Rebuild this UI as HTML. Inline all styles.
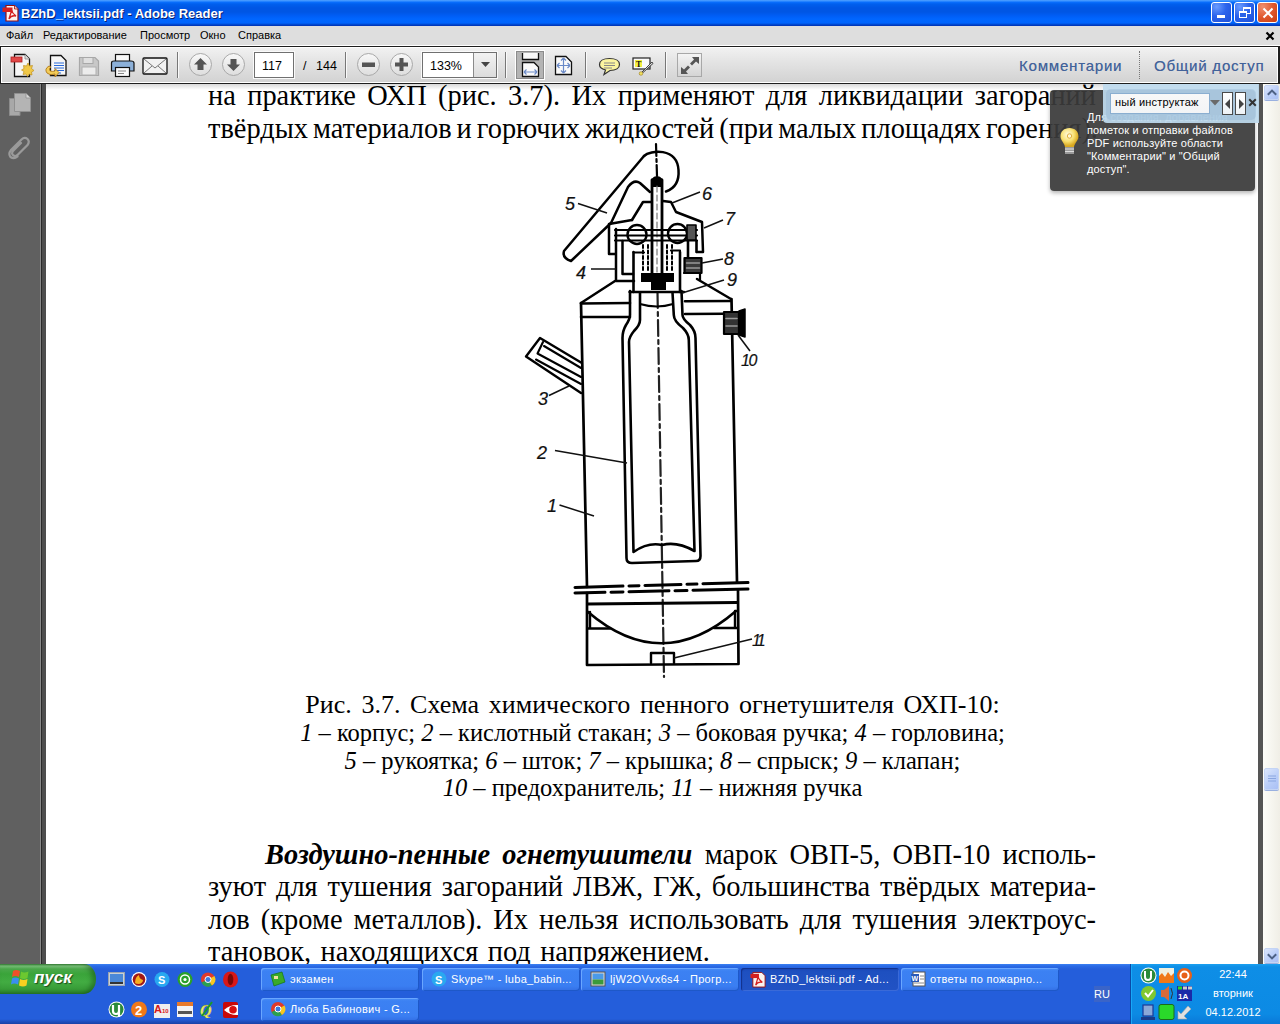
<!DOCTYPE html>
<html><head><meta charset="utf-8">
<style>
*{margin:0;padding:0;box-sizing:border-box}
html,body{width:1280px;height:1024px;overflow:hidden;background:#fff}
body{position:relative;font-family:"Liberation Sans",sans-serif}
.a{position:absolute}
#title{left:0;top:0;width:1280px;height:26px;background:linear-gradient(#4a9cff 0,#3d95ff 1px,#0a70ff 2px,#0060ee 4px,#0056e4 8px,#0056e4 12px,#005ef6 16px,#0066ff 19px,#0064fc 23px,#0048d0 24.5px,#0030b0 26px)}
#title .t{left:21px;top:6px;color:#fff;font:bold 13px "Liberation Sans",sans-serif;text-shadow:1px 1px 0 #0a1e6e;white-space:nowrap}
#menu{left:0;top:26px;width:1280px;height:19px;background:#dedede}
#menu span{position:absolute;top:3px;font-size:11px;color:#000;white-space:nowrap}
#tb{left:0;top:45px;width:1280px;height:39px;background:#fff}
#tbin{left:0;top:46px;width:1280px;height:38px;border-top:1px solid #1e1e1e;border-left:1px solid #1e1e1e;border-right:2px solid #1e1e1e;border-bottom:1px solid #1e1e1e;box-shadow:inset 1px 1px 0 #fff,inset -1px -1px 0 #fff;background:linear-gradient(#f2f2f2,#e4e4e4 40%,#d2d2d2)}
#content{left:0;top:84px;width:1280px;height:880px;background:#fff}
#nav{left:0;top:84px;width:40px;height:880px;background:#606060}
#nav2{left:40px;top:84px;width:6px;height:880px;background:#4e4e4e;border-left:1px solid #8a8a8a}
#nav3{left:41px;top:84px;width:1px;height:880px;background:#2a2a2a}
#rstrip{left:1258px;top:84px;width:5px;height:880px;background:#555}
#sb{left:1263px;top:84px;width:17px;height:880px;background:linear-gradient(90deg,#fdfdf9,#f0eee6)}
#page{left:46px;top:84px;width:1213px;height:880px;background:#fff;overflow:hidden}
.body{font-family:"Liberation Serif",serif;font-size:28.4px;line-height:32px;color:#000;white-space:nowrap}
.j{text-align:justify;text-align-last:justify;white-space:normal}
.cap{font-family:"Liberation Serif",serif;font-size:24.5px;line-height:28px;color:#000;white-space:nowrap;text-align:center}
#taskbar{left:0;top:964px;width:1280px;height:60px;background:linear-gradient(#3c81f3 0,#2b6be6 2px,#245edb 5px,#245edb 55px,#1941a5 60px)}

.wb{top:2px;width:21px;height:21px;border:1px solid #fff;border-radius:3px;background:radial-gradient(circle at 25% 20%,#6a9cff,#2c64ec 45%,#1d4fd8)}
.cl{background:radial-gradient(circle at 25% 20%,#f09070,#e0582e 50%,#c83c10)}
.sep{top:5px;width:2px;height:26px;border-left:1px solid #777;border-right:1px solid #fafafa}
.circ{top:6px;width:23px;height:23px;border:1px solid #a9a9a9;border-radius:50%;background:linear-gradient(#f8f8f8,#dedede)}
.circ svg{position:absolute;left:0;top:0}
.inp{top:5px;height:26px;background:#fff;border:1px solid #707070;box-shadow:0 0 0 1px #fafafa;font-size:12.5px;color:#000}
.tt{font-size:12.5px;color:#000}
.cm{font-size:15px;letter-spacing:0.8px;color:#42629a;text-shadow:0.2px 0 0 rgba(66,98,154,0.6)}

.tip{font-size:11px;line-height:12.9px;color:#fff;white-space:nowrap;letter-spacing:0.15px}
.fbtn{top:92px;width:11px;height:23px;background:linear-gradient(#fff,#eef2f6);border:1px solid #4a4a4a}
.sbb{width:15px;height:15px;border:1px solid #c4d4f4;border-radius:2px;background:linear-gradient(135deg,#dce6fc,#b8ccf8 60%,#aac0f4);box-shadow:0 1px 0 #9ab0e0}

.tbtn{letter-spacing:0.3px;width:158px;height:23px;border-radius:3px;background:linear-gradient(#4a90f8 0,#3c81f3 3px,#3a7ef2 18px,#336ee4 23px);box-shadow:inset 1px 1px 0 #6aa6ff,inset -1px -1px 0 #1e58c8;color:#fff;font-size:11px;white-space:nowrap;overflow:hidden}
.tbtn span{position:absolute;left:29px;top:5px}
.act{background:linear-gradient(#1a48b8,#1e50c0 4px,#2152c4 20px);box-shadow:inset 1px 1px 1px #12308a,inset -1px -1px 0 #3a6ad8}
.clk{color:#fff;font-size:11px;text-align:center;white-space:nowrap}
</style></head><body>
<div id="title" class="a">
<svg class="a" style="left:2px;top:4px" width="18" height="18" viewBox="0 0 18 18">
<path d="M4 1.5 H12.5 L16 5 V17 H4 Z" fill="#fbf4f0" stroke="#9a1010" stroke-width="1.2"/>
<path d="M12.5 1.5 V5 H16" fill="#e8d0d0" stroke="#9a1010" stroke-width="0.8"/>
<rect x="0.5" y="3.5" width="10" height="4.5" fill="#d42020"/>
<path d="M7 15 Q9 9 9.5 6 Q10 9 14 12 Q9 11 7 15 Z" fill="none" stroke="#d42020" stroke-width="1.4"/>
</svg>
<div class="a t">BZhD_lektsii.pdf - Adobe Reader</div>
<div class="a wb" style="left:1211px"><div class="a" style="left:5px;top:12px;width:8px;height:3px;background:#fff"></div></div>
<div class="a wb" style="left:1234px"><div class="a" style="left:8px;top:4px;width:8px;height:7px;border:1.5px solid #fff;border-top-width:2px"></div><div class="a" style="left:4px;top:8px;width:8px;height:7px;border:1.5px solid #fff;border-top-width:2px;background:#2a62e8"></div></div>
<div class="a wb cl" style="left:1257px"><svg class="a" style="left:3px;top:3px" width="14" height="14"><path d="M2.5 2.5 L11.5 11.5 M11.5 2.5 L2.5 11.5" stroke="#fff" stroke-width="2"/></svg></div>
</div>
<div id="menu" class="a">
<span style="left:6px">Файл</span><span style="left:43px">Редактирование</span><span style="left:140px">Просмотр</span><span style="left:200px">Окно</span><span style="left:238px">Справка</span>
<svg class="a" style="left:1265px;top:5px" width="10" height="10"><path d="M1.5 1.5 L8.5 8.5 M8.5 1.5 L1.5 8.5" stroke="#000" stroke-width="2.2"/></svg>
</div>
<div id="tb" class="a"></div>
<div id="tbin" class="a">
<!-- icon 1 create -->
<svg class="a" style="left:9px;top:6px" width="26" height="26" viewBox="0 0 26 26">
<path d="M4.5 1.5 H15 L19.5 6 V23.5 H4.5 Z" fill="#f6f6f6" stroke="#111" stroke-width="1.3"/>
<path d="M15 1.5 V6 H19.5" fill="#ddd" stroke="#888" stroke-width="0.8"/>
<rect x="1" y="4" width="11" height="5" fill="#e04848" stroke="#b02020" stroke-width="0.8"/>
<path d="M18 10 L19.5 13 L22.5 12.5 L21.5 15.5 L24 17.5 L21.5 19 L22 22 L19 21 L17.5 23.5 L16 21 L13 21.5 L14 18.5 L11.5 17 L14 15.5 L13.5 12.5 L16.5 13 Z" fill="#f0c848" stroke="#c09020" stroke-width="0.7"/>
</svg>
<!-- icon 2 -->
<svg class="a" style="left:43px;top:7px" width="26" height="26" viewBox="0 0 26 26">
<path d="M6.5 1.5 H17 L22 6.5 V21.5 H6.5 Z" fill="#f6f6f6" stroke="#111" stroke-width="1.3"/>
<path d="M10 9 H20 M10 11.5 H20 M10 14 H20 M10 16.5 H20 M10 19 H17" stroke="#2a6ad8" stroke-width="1.2"/>
<path d="M5 12 Q0 15 3 19 Q6 22 11 20 L11 23 L15 18.5 L11 14.5 L11 17 Q6 18 5.5 16 Q5 14 7 13 Z" fill="#f2cc58" stroke="#b07818" stroke-width="0.9"/>
</svg>
<!-- save -->
<svg class="a" style="left:77px;top:9px" width="22" height="22" viewBox="0 0 22 22">
<path d="M1.5 1.5 H17 L20.5 5 V19.5 H1.5 Z" fill="#c8c8c8" stroke="#a8a8a8" stroke-width="1.2"/>
<rect x="5" y="1.5" width="10" height="6" fill="#e0e0e0" stroke="#a8a8a8"/>
<rect x="4" y="11" width="14" height="8" fill="#ececec" stroke="#b0b0b0"/>
</svg>
<!-- print -->
<svg class="a" style="left:109px;top:6px" width="26" height="26" viewBox="0 0 26 26">
<rect x="5.5" y="1.5" width="14" height="8" fill="#f8f8f8" stroke="#111" stroke-width="1.2"/>
<path d="M1.5 10 Q1.5 8 4 8 H21 Q24 8 24 10 V18 H1.5 Z" fill="#8cb0d8" stroke="#111" stroke-width="1.2"/>
<rect x="5.5" y="14.5" width="14" height="9" fill="#fafafa" stroke="#111" stroke-width="1.2"/>
<path d="M8 18 H16 M8 20.5 H14" stroke="#888"/>
</svg>
<!-- mail -->
<svg class="a" style="left:141px;top:10px" width="27" height="19" viewBox="0 0 27 19">
<rect x="1" y="1" width="24" height="16" rx="1" fill="#f2f2f2" stroke="#111" stroke-width="1.3"/>
<path d="M2 2 L13 11 L24 2 M2 16 L10 9 M24 16 L16 9" fill="none" stroke="#777" stroke-width="1"/>
</svg>
<div class="a sep" style="left:176px"></div>
<!-- up/down -->
<div class="a circ" style="left:188px"><svg width="21" height="21" viewBox="0 0 21 21"><path d="M10.5 4 L17 10.5 H13.5 V16 H7.5 V10.5 H4 Z" fill="#555"/></svg></div>
<div class="a circ" style="left:221px"><svg width="21" height="21" viewBox="0 0 21 21"><path d="M10.5 17 L17 10.5 H13.5 V5 H7.5 V10.5 H4 Z" fill="#555"/></svg></div>
<div class="a inp" style="left:253px;width:40px"><span class="a" style="left:7px;top:6px">117</span></div>
<span class="a tt" style="left:302px;top:12px">/</span>
<span class="a tt" style="left:315px;top:12px">144</span>
<div class="a sep" style="left:344px"></div>
<div class="a circ" style="left:356px"><svg width="21" height="21" viewBox="0 0 21 21"><rect x="4" y="8.5" width="13" height="4.5" fill="#555"/></svg></div>
<div class="a circ" style="left:389px"><svg width="21" height="21" viewBox="0 0 21 21"><path d="M8.5 4 H12.5 V8.5 H17 V12.5 H12.5 V17 H8.5 V12.5 H4 V8.5 H8.5 Z" fill="#555"/></svg></div>
<div class="a inp" style="left:421px;width:75px"><span class="a" style="left:7px;top:6px">133%</span>
<div class="a" style="left:50px;top:0;width:23px;height:24px;border-left:1px solid #8a8a8a;background:linear-gradient(#f2f2f2,#dcdcdc)"><svg class="a" style="left:7px;top:9px" width="9" height="6"><path d="M0 0 H9 L4.5 5 Z" fill="#444"/></svg></div>
</div>
<div class="a sep" style="left:504px"></div>
<!-- pressed fit -->
<div class="a" style="left:515px;top:4px;width:28px;height:28px;background:#b4b4b4;border:1px solid #8c8c8c;box-shadow:0 0 0 1px #fff">
<svg class="a" style="left:4px;top:1px" width="20" height="25" viewBox="0 0 20 25"><path d="M1.5 0 V6.5 H17.5 V0" fill="#fafafa" stroke="#111" stroke-width="1.3"/><path d="M1.5 23.5 V9.5 H13 L17.5 14 V23.5 Z" fill="#fafafa" stroke="#111" stroke-width="1.3"/><path d="M3 19 H16 M3 19 L5.5 16.5 M3 19 L5.5 21.5 M16 19 L13.5 16.5 M16 19 L13.5 21.5" stroke="#6a8ac8" stroke-width="1.2" fill="none"/></svg>
</div>
<svg class="a" style="left:553px;top:8px" width="19" height="21" viewBox="0 0 19 21"><path d="M1.5 1.5 H12 L17.5 7 V19.5 H1.5 Z" fill="#fafafa" stroke="#111" stroke-width="1.3"/><path d="M9.5 3 V18 M3 10.5 H16 M9.5 3 L7 5.5 M9.5 3 L12 5.5 M9.5 18 L7 15.5 M9.5 18 L12 15.5 M3 10.5 L5.5 8 M3 10.5 L5.5 13 M16 10.5 L13.5 8 M16 10.5 L13.5 13" stroke="#6a8ac8" stroke-width="1.2" fill="none"/></svg>
<div class="a sep" style="left:584px"></div>
<svg class="a" style="left:597px;top:10px" width="23" height="19" viewBox="0 0 23 19"><path d="M11.5 1.5 C18 1.5 21.5 4 21.5 7.5 C21.5 11 18 13.5 12 13.5 L6 17.5 L7.5 13 C3.5 12 1.5 10 1.5 7.5 C1.5 4 5 1.5 11.5 1.5 Z" fill="#fbf5a0" stroke="#333" stroke-width="1.2"/><path d="M6 6 H17 M6 8.5 H17 M6 11 H14" stroke="#888" stroke-width="1"/></svg>
<svg class="a" style="left:631px;top:10px" width="22" height="19" viewBox="0 0 22 19"><rect x="1" y="1" width="17" height="11" fill="#fafafa" stroke="#222" stroke-width="1.2"/><rect x="3" y="3" width="7" height="7" fill="#f4f040"/><text x="4" y="9.5" font-size="8" font-family="Liberation Serif" font-weight="bold" fill="#111">T</text><path d="M20 5 L10 15 L8 17.5 L10.5 16 L21 6.5 Z" fill="#ddd" stroke="#444" stroke-width="1"/><circle cx="9" cy="16.5" r="1.8" fill="#f0e060" stroke="#a08020" stroke-width="0.6"/></svg>
<div class="a sep" style="left:664px"></div>
<div class="a" style="left:676px;top:6px;width:25px;height:24px;border:1px solid #a8a8a8;background:linear-gradient(#f4f4f4,#d4d4d4)"><svg class="a" style="left:2px;top:2px" width="20" height="19" viewBox="0 0 20 19"><path d="M19 1 L12 1 L14 3.5 L10 7.5 L12 9.5 L16 5.5 L19 8 Z M1 18 L8 18 L6 15.5 L10 11.5 L8 9.5 L4 13.5 L1 11 Z" fill="#555"/></svg></div>
<span class="a cm" style="left:1018px;top:9.5px">Комментарии</span>
<div class="a" style="left:1138px;top:4px;width:1px;height:28px;border-left:1px dotted #777"></div>
<span class="a cm" style="left:1153px;top:9.5px">Общий доступ</span>
</div>
<div id="content" class="a"></div>
<div id="page" class="a"></div>
<div class="a" style="left:46px;top:84px;width:1213px;height:6px;background:linear-gradient(#d8d8d8,#fff)"></div>

<div class="a body j" style="left:208px;top:80px;width:888px">на практике ОХП (рис. 3.7). Их применяют для ликвидации загораний</div>
<div class="a body" style="left:208px;top:113px;word-spacing:-2.1px">твёрдых материалов и горючих жидкостей (при малых площадях горения).</div>
<div class="a cap" style="left:0;top:691px;width:1305px;font-size:26px;word-spacing:3.2px">Рис. 3.7. Схема химического пенного огнетушителя ОХП-10:</div>
<div class="a cap" style="left:0;top:719px;width:1305px"><i>1</i> – корпус; <i>2</i> – кислотный стакан; <i>3</i> – боковая ручка; <i>4</i> – горловина;</div>
<div class="a cap" style="left:0;top:747px;width:1305px"><i>5</i> – рукоятка; <i>6</i> – шток; <i>7</i> – крышка; <i>8</i> – спрыск; <i>9</i> – клапан;</div>
<div class="a cap" style="left:0;top:774px;width:1305px"><i>10</i> – предохранитель; <i>11</i> – нижняя ручка</div>
<div class="a body j" style="left:208px;top:838.7px;width:888px"><span style="display:inline-block;width:57px"></span><b><i>Воздушно-пенные огнетушители</i></b> марок ОВП-5, ОВП-10 исполь-</div>
<div class="a body j" style="left:208px;top:870.8px;width:888px">зуют для тушения загораний ЛВЖ, ГЖ, большинства твёрдых материа-</div>
<div class="a body j" style="left:208px;top:903.6px;width:888px">лов (кроме металлов). Их нельзя использовать для тушения электроус-</div>
<div class="a body" style="left:208px;top:936.4px;word-spacing:2.3px">тановок, находящихся под напряжением.</div>
<svg class="a" style="left:0;top:0" width="1280" height="1024" viewBox="0 0 1280 1024">
<g fill="none" stroke="#000" stroke-width="2.5" stroke-linejoin="round" stroke-linecap="round">
<!-- axis -->
<path d="M656 144 L657 176" stroke-width="2.2" stroke-dasharray="12 3 3 3"/>
<path d="M657.5 292 L664 677" stroke-width="2.2" stroke-dasharray="16 4 4 4" stroke="#222"/>
<!-- handle 5 : arc -->
<path d="M644 156 C650 150 677 147 678.5 170 C679.5 183 673 189 666 191.5"/>
<!-- handle bar -->
<path d="M644 156 L564 251 Q562 258 571 261 L611 223"/>
<!-- hump -->
<path d="M611 223 L628 187 Q634 179 640 183 L650 192"/>
<!-- stem 6 -->
<path d="M652 180 L652 276 M662 180 L662 276" stroke-width="2.8"/>
<path d="M652 180 Q657 174 662 180 L662 186 L652 186 Z" fill="#000" stroke-width="2"/>
<path d="M657 186 L657 272" stroke-width="1.2" stroke="#777" stroke-dasharray="6 3"/>
<!-- lugs -->
<path d="M632 220 L643 202 L651 202 M663 201 L671 202 L676 212 L702 222 L703 252 L697 252"/>
<!-- cover -->
<path d="M609 224 L632 220 M609 224 L609 254 L615 254"/>
<path d="M615 230 L697 230 M615 235.5 L697 235.5 M615 240.5 L697 240.5" stroke-width="2.2"/>
<circle cx="637" cy="234.5" r="9.5" stroke-width="2.4"/>
<circle cx="677.5" cy="233.5" r="9.5" stroke-width="2.4"/>
<!-- neck 4 -->
<path d="M616 229 L616 281 L634 281 M622.5 241 L622.5 274 L633 274"/>
<path d="M633.5 252 L633.5 292 M680 252 L680 292 M688 241 L688 257 M696.5 241 L696.5 252" stroke-width="2.6"/>
<path d="M643 245 L643 272 M648 245 L648 272 M667 245 L667 272 M672 245 L672 272" stroke-width="2" stroke-dasharray="3 2.5"/>
<path d="M633.5 252.5 L644 252.5 M671 250.5 L680 250.5" stroke-width="2.2"/>
<rect x="687" y="225" width="9" height="15" fill="#555" stroke="#000" stroke-width="1.6"/>
<!-- valve 9 -->
<rect x="641" y="273" width="33" height="9" fill="#000" stroke="none"/>
<rect x="651" y="281" width="15" height="9" fill="#000" stroke="none"/>
<path d="M629.5 292 L684 292" stroke-width="2.4"/>
<!-- sprayer 8 -->
<rect x="684.5" y="258" width="17" height="15" fill="#3a3a3a" stroke="#000" stroke-width="2.2"/>
<path d="M686.5 263 L699.5 263 M686.5 268 L699.5 268" stroke="#999" stroke-width="1.4"/>
<path d="M684 273 L700 273 L700 280" stroke-width="2.2"/>
<!-- shoulders -->
<path d="M615 281 L581 303 M697 279 L731 299"/>
<path d="M581 303.5 L630 303 M685 301.3 L731 301 M581 317 L630 317 M685 314 L725 313.8" stroke-width="2.6"/>
<!-- cup outer -->
<path d="M630 291 L630 315 Q630 319 626 325 Q622.5 331 622.5 338 L626.5 558 Q626.5 563 632 563 L696 561 Q700.5 561 700.5 556 L695.5 338 Q695.5 331 690 325 Q682.5 319 682.5 315 L681.5 291" stroke-width="2.6"/>
<!-- cup inner -->
<path d="M640 292.5 L640 320 Q640 325 634 331 Q629 337 629 342 L633.5 552 Q648 542 662 545 Q677 541 694.5 551 L688.8 340 Q688.8 334 683 328 Q673.8 321 673.8 315 L672.5 292.5" stroke-width="2.6"/>
<path d="M640 304 Q657 309 673 304" stroke-width="2"/>
<!-- body -->
<path d="M581 303 L587 587 M731.5 299 L737 582" stroke-width="2.7"/>
<path d="M575 587.5 L748 582.5" stroke-width="3" stroke-dasharray="48 6 10 6 36 6 10 6 60"/>
<path d="M575 593 L748 589" stroke-width="3" stroke-dasharray="30 6 12 6 40 6 12 6 70"/>
<path d="M587 593 L587 665 L738.5 664 L738 590" stroke-width="2.7"/>
<path d="M588 604 L737 602.5" stroke-width="3.2"/>
<path d="M588 612 Q662 675 736 611" stroke-width="2.6"/>
<path d="M588 628.5 L610 628.5 M590 612 L590 628.5 M737 628 L714 628 M735 611 L735 628" stroke-width="2.4"/>
<path d="M651 663 L651 653 L674 653 L674 663" stroke-width="2.4"/>
<!-- side handle 3 -->
<path d="M581 362.5 L540 338 L526 356.5 L581 393" stroke-width="2.4"/>
<path d="M543 342 L537.5 353.5 L581 377 M536 359.5 L581 384 M544 346 L581 368" stroke-width="2.1"/>
<!-- protector 10 -->
<rect x="724" y="312" width="15" height="22" fill="#333" stroke="#000" stroke-width="2.2"/>
<path d="M739 311 L745 309 L745 337 L739 335 Z" fill="#000" stroke-width="1.5"/>
<path d="M726 318.5 L737 318.5 M726 326 L737 326" stroke="#999" stroke-width="1.6"/>
</g>
<!-- leaders -->
<g fill="none" stroke="#111" stroke-width="1.5">
<path d="M578 203.5 L607 213"/>
<path d="M700 192 L672 203"/>
<path d="M723 220 L704 228"/>
<path d="M591 269 L616 269"/>
<path d="M723 259 L702 263"/>
<path d="M724 280 L682 293"/>
<path d="M738 335 L750 351"/>
<path d="M549 395.5 L569 386"/>
<path d="M555 450.5 L627 463"/>
<path d="M559.5 505 L594 516"/>
<path d="M752 639 L674 658"/>
</g>
<g font-family="Liberation Sans" font-style="italic" font-size="18" fill="#111" stroke="#111" stroke-width="0.2">
<text x="565" y="210">5</text>
<text x="702" y="199.5">6</text>
<text x="725" y="225">7</text>
<text x="576" y="278.5">4</text>
<text x="724" y="264.5">8</text>
<text x="727" y="286">9</text>
<text x="741" y="366" font-size="16" letter-spacing="-1.5">10</text>
<text x="538" y="405">3</text>
<text x="537" y="459">2</text>
<text x="547" y="512">1</text>
<text x="752" y="646" font-size="16" letter-spacing="-3">11</text>
</g>
</svg>

<div id="nav" class="a"></div>
<div id="nav2" class="a"></div>
<div id="nav3" class="a"></div>
<div id="rstrip" class="a"></div>
<div id="sb" class="a"></div>
<!-- left nav icons -->
<svg class="a" style="left:8px;top:92px" width="24" height="25" viewBox="0 0 24 25">
<path d="M1.5 6.5 H12 V23.5 H1.5 Z" fill="#a8a8a8" stroke="#8c8c8c" stroke-width="1"/>
<path d="M6.5 1.5 H18 L22.5 6 V19.5 H6.5 Z" fill="#b4b4b4" stroke="#909090" stroke-width="1"/>
<path d="M18 1.5 V6 H22.5" fill="#d8d8d8" stroke="#909090" stroke-width="0.8"/>
</svg>
<svg class="a" style="left:7px;top:135px" width="24" height="25" viewBox="0 0 24 25">
<path d="M14 8 L6 16 Q4 19 6.5 20.5 Q9 22 11 19.5 L20.5 10 Q23 6.5 20.5 4 Q17.5 1.5 14.5 4.5 L4 15 Q1 19 3.5 22 Q7 24.5 10.5 21.5" fill="none" stroke="#9a9a9a" stroke-width="2.2" stroke-linecap="round"/>
</svg>
<!-- tooltip -->
<div class="a" style="left:1050px;top:90px;width:205px;height:101px;border-radius:4px;background:rgba(58,58,58,0.93);box-shadow:0 2px 4px rgba(0,0,0,0.3)"></div>
<svg class="a" style="left:1059px;top:127px" width="21" height="30" viewBox="0 0 21 30">
<defs><radialGradient id="bg1" cx="0.4" cy="0.35" r="0.6"><stop offset="0" stop-color="#fffbe0"/><stop offset="0.6" stop-color="#f8e070"/><stop offset="1" stop-color="#d8a820"/></radialGradient></defs>
<path d="M10.5 1 C16 1 19.5 4.5 19.5 9.5 C19.5 13.5 15.5 16 15 20 H6 C5.5 16 1.5 13.5 1.5 9.5 C1.5 4.5 5 1 10.5 1 Z" fill="url(#bg1)"/>
<rect x="6" y="20" width="9" height="7" fill="#9a9a9a"/><path d="M6 22 H15 M6 24.5 H15" stroke="#ddd" stroke-width="1"/>
<circle cx="10.5" cy="9" r="2.2" fill="#fff8d8" stroke="#e0b040" stroke-width="1"/>
</svg>
<div class="a tip" style="left:1087px;top:111px">Для создания, добавления<br>пометок и отправки файлов<br>PDF используйте области<br>"Комментарии" и "Общий<br>доступ".</div>
<!-- find bar -->
<div class="a" style="left:1103px;top:84px;width:156px;height:39px;background:rgba(190,218,238,0.93);border-bottom-left-radius:4px"></div>
<div class="a" style="left:1106px;top:89px;width:150px;height:31px;background:rgba(150,185,212,0.45);border-radius:5px"></div>
<div class="a" style="left:1110px;top:93px;width:100px;height:21px;background:linear-gradient(#f8f8f8,#f2f4f6);border:1px solid #8aaed0"></div>
<span class="a" style="left:1115px;top:96px;font-size:11px;color:#000;white-space:nowrap;letter-spacing:0.2px">ный инструктаж</span>
<svg class="a" style="left:1210px;top:100px" width="10" height="6"><path d="M0 0 H10 L5 5.5 Z" fill="#6a6a6a"/></svg>
<div class="a fbtn" style="left:1222px"><svg class="a" style="left:2px;top:6px" width="6" height="10"><path d="M5 0 V10 L0 5 Z" fill="#444"/></svg></div>
<div class="a fbtn" style="left:1235px"><svg class="a" style="left:3px;top:6px" width="6" height="10"><path d="M0 0 V10 L5 5 Z" fill="#444"/></svg></div>
<svg class="a" style="left:1248px;top:98px" width="9" height="9"><path d="M1.2 1.2 L7.8 7.8 M7.8 1.2 L1.2 7.8" stroke="#333" stroke-width="2"/></svg>
<!-- scrollbar -->
<div class="a sbb" style="left:1264px;top:85px"><svg class="a" style="left:2px;top:3px" width="10" height="7"><path d="M0.8 5.8 L5 1.6 L9.2 5.8" fill="none" stroke="#4d6185" stroke-width="2"/></svg></div>
<div class="a sbb" style="left:1264px;top:768px;height:22px"><svg class="a" style="left:3px;top:6px" width="8" height="9"><path d="M0 1 H8 M0 3.5 H8 M0 6 H8" stroke="#8aa6e0" stroke-width="1"/></svg></div>
<div class="a sbb" style="left:1264px;top:948px"><svg class="a" style="left:2px;top:4px" width="10" height="7"><path d="M0.8 1.2 L5 5.4 L9.2 1.2" fill="none" stroke="#4d6185" stroke-width="2"/></svg></div>

<div id="taskbar" class="a">
<!-- start -->
<div class="a" style="left:0;top:0;width:96px;height:30px;border-radius:0 12px 12px 0/0 15px 15px 0;background:linear-gradient(#3a8a3a 0,#7cc47c 2px,#4aa84a 5px,#3aa43a 10px,#42ac42 18px,#389c38 25px,#2a7e2a 30px);box-shadow:inset -4px 0 5px rgba(0,40,0,0.35)"></div>
<svg class="a" style="left:10px;top:5px" width="20" height="19" viewBox="0 0 20 19">
<path d="M3 2 Q6 0 10 2 L9 8 Q5 6 2 8 Z" fill="#f0502a"/>
<path d="M11 2.5 Q14 4.5 18.5 2.5 L17.5 9 Q14 11 10 9 Z" fill="#6cc830"/>
<path d="M2 9.5 Q5 7.5 9 9.5 L8 15.5 Q4 13.5 1 15.5 Z" fill="#3a8ef0"/>
<path d="M10 10 Q13.5 12 17.5 10 L16.5 16.5 Q13 18.5 9 16.5 Z" fill="#f8d020"/>
</svg>
<span class="a" style="left:34px;top:4px;color:#fff;font:italic bold 17px 'Liberation Sans',sans-serif;text-shadow:1px 1px 1px #1a4a1a">пуск</span>
<!-- quick launch row1 -->
<svg class="a" style="left:108px;top:7px" width="132" height="17" viewBox="0 0 132 17">
<rect x="0.5" y="1.5" width="16" height="13" fill="#c8d0d8" stroke="#9aa4b0"/><rect x="2" y="3" width="13" height="8" fill="#4a88d8"/><rect x="2" y="11" width="13" height="2" fill="#333"/>
<circle cx="31" cy="8.5" r="7.5" fill="#fff"/><circle cx="31" cy="8.5" r="6.3" fill="#a01818"/><path d="M27 12 Q27 6 31 4 Q31 8 35 9 Q35 12 31 13 Q28 13 27 12Z" fill="#f8b020"/>
<circle cx="54" cy="8.5" r="7.5" fill="#28a8f0"/><text x="50" y="13" font-family="Liberation Sans" font-weight="bold" font-size="11" fill="#fff">S</text>
<circle cx="77" cy="8.5" r="7.5" fill="#2aa02a"/><circle cx="77" cy="8.5" r="4.5" fill="none" stroke="#fff" stroke-width="1.5"/><circle cx="77" cy="8.5" r="1.6" fill="#fff"/>
<circle cx="100" cy="8.5" r="7" fill="#e03a2a"/><path d="M100 8.5 L93.5 11.5 A7 7 0 0 0 104 14.5 Z" fill="#2aa050"/><path d="M100 8.5 L104 14.5 A7 7 0 0 0 106.5 5 Z" fill="#f8c820"/><circle cx="100" cy="8.5" r="3" fill="#3a78e0" stroke="#fff" stroke-width="1"/>
<ellipse cx="122.5" cy="8.5" rx="7.5" ry="8" fill="#d81818"/><ellipse cx="122.5" cy="8.5" rx="2.8" ry="5.8" fill="#7a0808"/>
</svg>
<!-- quick launch row2 -->
<svg class="a" style="left:108px;top:37px" width="132" height="17" viewBox="0 0 132 17">
<circle cx="8.5" cy="8.5" r="8" fill="#fff"/><circle cx="8.5" cy="8.5" r="7" fill="#2a8a3a"/><path d="M5 4 V10 Q5 13 8 13 Q11 13 11 10 V4 M11 10 V16" stroke="#fff" stroke-width="2.2" fill="none"/>
<circle cx="31" cy="8.5" r="8" fill="#f07818"/><text x="27" y="14" font-family="Liberation Sans" font-weight="bold" font-size="13" fill="#fff">2</text>
<rect x="46" y="3" width="16" height="14" fill="#eee"/><text x="46" y="12" font-family="Liberation Sans" font-weight="bold" font-size="11" fill="#d81818">A</text><text x="54" y="12" font-family="Liberation Sans" font-weight="bold" font-size="6" fill="#d81818">10</text>
<rect x="69" y="1" width="16" height="15" fill="#f4f4f4"/><rect x="69" y="1" width="16" height="4" fill="#e87a2a"/><rect x="70" y="10" width="14" height="3" fill="#555"/>
<text x="92" y="15" font-family="Liberation Serif" font-weight="bold" font-style="italic" font-size="16" fill="#f0f070" stroke="#a0a020" stroke-width="0.4">Q</text><path d="M94 15 L104 1" stroke="#1a9a2a" stroke-width="2"/>
<rect x="115" y="1" width="15" height="16" rx="2" fill="#c80808"/><path d="M116 9 Q122 3.5 130 4 L130 14 Q122 14.5 116 9 Z" fill="#fff"/><circle cx="125" cy="8.8" r="3.8" fill="#d81010"/>
</svg>
<!-- task buttons -->
<div class="a tbtn" style="left:261px;top:4px"><svg class="a" style="left:9px;top:3px" width="16" height="16" viewBox="0 0 16 16"><path d="M1 4 L12 1 L15 11 L4 15 Z" fill="#3aaa2a" stroke="#1a7a1a" stroke-width="0.8"/><rect x="4" y="5" width="4" height="3" fill="#f0e0a0"/></svg><span>экзамен</span></div>
<div class="a tbtn" style="left:422px;top:4px"><svg class="a" style="left:9px;top:3px" width="16" height="16" viewBox="0 0 16 16"><circle cx="8" cy="8" r="7.5" fill="#2aa8f0"/><text x="4" y="12.5" font-family="Liberation Sans" font-weight="bold" font-size="11" fill="#fff">S</text></svg><span>Skype™ - luba_babin...</span></div>
<div class="a tbtn" style="left:581px;top:4px"><svg class="a" style="left:9px;top:3px" width="16" height="16" viewBox="0 0 16 16"><rect x="1" y="1" width="14" height="14" fill="#ddd" stroke="#555"/><rect x="2.5" y="2.5" width="11" height="6" fill="#4a9ae8"/><rect x="2.5" y="8.5" width="11" height="5" fill="#3a9a3a"/></svg><span>ljW2OVvx6s4 - Прогр...</span></div>
<div class="a tbtn act" style="left:741px;top:4px"><svg class="a" style="left:9px;top:3px" width="17" height="17" viewBox="0 0 18 18"><path d="M3 1.5 H12.5 L16 5 V17 H3 Z" fill="#fbf4f0" stroke="#9a1010" stroke-width="1"/><rect x="0.5" y="3" width="9" height="4.5" fill="#d42020"/><path d="M6 15 Q8 9 8.5 6 Q9 9 13 12 Q8 11 6 15 Z" fill="none" stroke="#d42020" stroke-width="1.3"/></svg><span>BZhD_lektsii.pdf - Ad...</span></div>
<div class="a tbtn" style="left:901px;top:4px"><svg class="a" style="left:9px;top:3px" width="16" height="16" viewBox="0 0 16 16"><rect x="3" y="1" width="12" height="14" fill="#fff" stroke="#555"/><rect x="1" y="3" width="8" height="8" fill="#2a5ab8"/><text x="1.5" y="10" font-family="Liberation Sans" font-weight="bold" font-size="7" fill="#fff">W</text><path d="M10 5 H14 M10 8 H14 M4 12 H14" stroke="#888"/></svg><span>ответы по пожарно...</span></div>
<div class="a tbtn" style="left:261px;top:34px"><svg class="a" style="left:9px;top:3px" width="16" height="16" viewBox="0 0 16 16"><circle cx="8" cy="8" r="7" fill="#e03a2a"/><path d="M8 8 L1.5 11 A7 7 0 0 0 12 14 Z" fill="#2aa050"/><path d="M8 8 L12 14 A7 7 0 0 0 14.5 4.5 Z" fill="#f8c820"/><circle cx="8" cy="8" r="3" fill="#3a78e0" stroke="#fff" stroke-width="1"/></svg><span>Люба Бабинович - G...</span></div>
<!-- RU -->
<div class="a" style="left:1094px;top:22px;width:16px;height:16px;background:#3a64c8;color:#fff;font-size:11px;line-height:16px;text-align:center">RU</div>
<!-- tray -->
<div class="a" style="left:1130px;top:0;width:150px;height:60px;background:linear-gradient(#1aa0f0 0,#0e8ee6 3px,#0c8ae4 50px,#0a78d8 60px);border-left:1px solid #0a4aa8;box-shadow:inset 1px 0 0 #18a8f8"></div>
<svg class="a" style="left:1140px;top:3px" width="54" height="56" viewBox="0 0 54 56">
<circle cx="8.5" cy="8.5" r="8" fill="#fff"/><circle cx="8.5" cy="8.5" r="7" fill="#2a8a3a"/><path d="M5 4 V10 Q5 13 8 13 Q11 13 11 10 V4" stroke="#fff" stroke-width="2" fill="none"/>
<rect x="19" y="1" width="15" height="15" fill="#f0f0e0"/><path d="M19 16 V9 L22 6 L25 10 L28 5 L31 9 L34 6 V16 Z" fill="#f07818"/>
<circle cx="44.5" cy="8.5" r="7.5" fill="#e86018"/><circle cx="44.5" cy="8.5" r="4" fill="none" stroke="#fff" stroke-width="2"/>
<circle cx="8.5" cy="26.5" r="7.5" fill="#80c830"/><path d="M5 26 L8 29.5 L13 23" stroke="#fff" stroke-width="2" fill="none"/>
<path d="M21 23 H24 L29 19 V34 L24 30 H21 Z" fill="#d86a3a"/><path d="M31 21 Q34 26.5 31 32" stroke="#333" fill="none"/>
<rect x="37" y="19" width="15" height="15" fill="#1a2aa8"/><rect x="38" y="19.5" width="4" height="3" fill="#2ad82a"/><rect x="43" y="19.5" width="4" height="3" fill="#ccc"/><rect x="48" y="19.5" width="4" height="3" fill="#ccc"/><text x="38" y="32" font-family="Liberation Sans" font-weight="bold" font-size="8" fill="#fff">1A</text>
<rect x="3" y="38" width="10" height="11" fill="#8aa8d8" stroke="#1a3a98" stroke-width="1.2"/><rect x="1" y="50" width="14" height="3" fill="#1a3a88"/>
<rect x="19" y="37.5" width="15" height="15" rx="2" fill="#2ad82a" stroke="#1a6a1a"/>
<path d="M38 52 L38 44 L41 47 L48 39 L51 42 L44 49 L47 52 Z" fill="#e0e0e0" stroke="#aaa" stroke-width="0.6"/>
</svg>
<div class="a clk" style="left:1200px;top:4px;width:66px">22:44</div>
<div class="a clk" style="left:1200px;top:23px;width:66px">вторник</div>
<div class="a clk" style="left:1200px;top:42px;width:66px">04.12.2012</div>
</div>

</body></html>
